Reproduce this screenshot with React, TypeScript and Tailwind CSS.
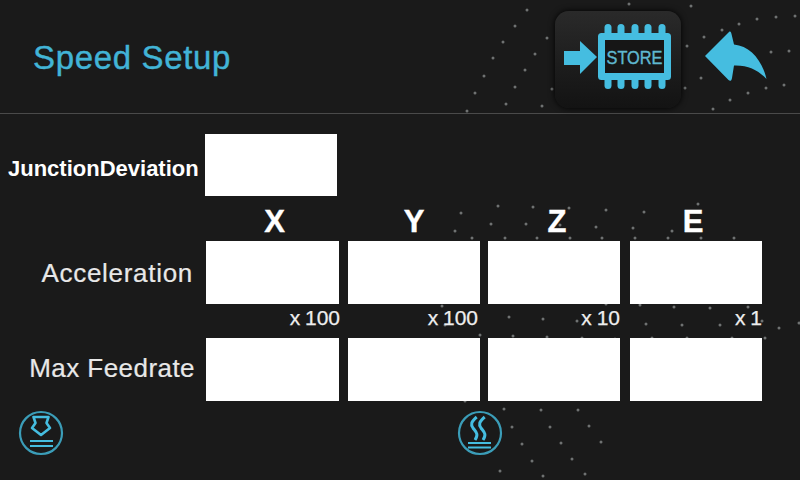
const dots: [number, number][] = [
  [527,10],[515,26],[503,42],[493,58],[484,76],[475,93],[467,111],[547,38],[535,54],[525,70],[515,87],[506,104],[542,106],[552,89],
  [629,4],[691,6],[704,37],[722,30],[739,24],[757,19],[776,17],[795,16],[687,46],[771,52],[789,51],[701,78],[766,88],[784,85],[748,93],[730,100],[685,88],[713,109],
  [498,206],[533,207],[569,208],[606,210],[644,212],[698,204],[461,213],[491,224],[526,224],[560,225],[596,227],[633,228],[672,231],[455,231],[472,238],[505,238],[537,238],[570,238],[602,238],[635,238],[668,238],[701,238],[734,238],
  [442,306],[606,304],[640,305],[674,307],[710,308],[748,307],[445,325],[509,317],[543,319],[577,321],[646,324],[682,325],[720,325],[762,321],[779,328],[799,323],[480,335],[513,336],[547,337],[582,338],[615,339],[652,338],[687,338],[732,338],[765,338],
  [465,401],[504,409],[541,410],[578,410],[512,427],[550,427],[589,426],[522,444],[561,443],[601,442],[532,461],[572,459],[500,471],[543,476],[585,474],
];

const font = "font-['Liberation_Sans',Arial,sans-serif]";
const cols = "grid-cols-[142px_140px_142px_132px]";

function StoreIcon() {
  const pins = [53, 66, 80, 93, 107];
  return (
    <svg width="126" height="97" viewBox="0 0 126 97">
      {pins.map((x) => (
        <g key={x} fill="#45bde0">
          <rect x={x - 3.5} y="13" width="7" height="12" rx="3.5" />
          <rect x={x - 3.5} y="66" width="7" height="12" rx="3.5" />
        </g>
      ))}
      <path d="M9 40H25V30L42 46L25 63V54H9Z" fill="#45bde0" />
      <rect x="46.5" y="25.5" width="66" height="40" fill="#161616" stroke="#45bde0" strokeWidth="7" strokeLinejoin="round" />
      <text x="79.5" y="53" textAnchor="middle" fontFamily="'Liberation Sans', Arial, sans-serif" fontSize="18" fill="#5fb8cf" stroke="#5fb8cf" strokeWidth="0.4" textLength="56" lengthAdjust="spacingAndGlyphs">STORE</text>
    </svg>
  );
}

function BackIcon() {
  return (
    <svg width="64" height="52" viewBox="0 0 64 52">
      <path d="M1 26L25 2C26.5 1 27 2 27.5 4L30 14.5C46 16 58 30 62.5 49C55 41 45 35 30 35.5L28 48C27.5 51 26 51.5 24.5 50Z" fill="#45bde0" />
    </svg>
  );
}

function ExtrudeIcon() {
  return (
    <svg width="46" height="48" viewBox="0 0 46 48" fill="none">
      <circle cx="23" cy="24" r="21" stroke="#3b9db8" strokeWidth="2.2" />
      <path d="M15.5 8H30.5L28.5 14L32 19L23 26L14 19L17.5 14Z" stroke="#45bde0" strokeWidth="2.6" strokeLinejoin="round" />
      <path d="M12 32H35M12 37H35" stroke="#45bde0" strokeWidth="2.2" />
    </svg>
  );
}

function HeatIcon() {
  return (
    <svg width="46" height="48" viewBox="0 0 46 48" fill="none">
      <circle cx="23" cy="24" r="21" stroke="#3b9db8" strokeWidth="2.2" />
      <path d="M19.7 8C14 13 13.5 15.5 16 19C19 23 22 25 18 31" stroke="#45bde0" strokeWidth="3" />
      <path d="M27.7 8C22 13 21.5 15.5 24 19C27 23 30 25 26 31" stroke="#45bde0" strokeWidth="3" />
      <path d="M11 34H34M11 38.5H34" stroke="#45bde0" strokeWidth="2.2" />
    </svg>
  );
}

function Cells() {
  return (
    <div className={`grid ${cols}`}>
      <div className="h-[63px] w-[133px] bg-white" />
      <div className="h-[63px] w-[132px] bg-white" />
      <div className="h-[63px] w-[132px] bg-white" />
      <div className="h-[63px] w-[132px] bg-white" />
    </div>
  );
}

export default function App() {
  return (
    <div className={`relative h-[480px] w-[800px] overflow-hidden bg-[#1a1a1a] ${font}`}>
      <svg className="absolute inset-0" width="800" height="480" viewBox="0 0 800 480">
        {dots.map(([x, y]) => (
          <circle key={`${x}-${y}`} cx={x} cy={y} r="1.5" fill="#6f7272" />
        ))}
      </svg>

      <div className="relative flex h-full flex-col">
        <header className="flex h-[114px] shrink-0 items-start border-b border-[#4a4a4a]">
          <h1 className="ml-[33px] mt-[39px] w-[522px] text-[33px] font-normal leading-[38px] tracking-[0.65px] text-[#42b4d6] [-webkit-text-stroke:0.4px_#42b4d6]">Speed Setup</h1>
          <button className="mt-[11px] h-[97px] w-[126px] rounded-[14px] bg-gradient-to-b from-[#2a2a2a] to-[#131313] shadow-[0_0_6px_#000]">
            <StoreIcon />
          </button>
          <div className="ml-[23px] mt-[30px]">
            <BackIcon />
          </div>
        </header>

        <div className="mt-[20px] flex h-[62px]">
          <div className="ml-[8px] w-[190px] whitespace-nowrap pt-[24px] text-[22px] font-bold leading-none text-white">JunctionDeviation</div>
          <div className="ml-[7px] h-[62px] w-[132px] bg-white" />
        </div>

        <div className={`ml-[206px] mt-[9px] grid h-[36px] ${cols} text-center text-[31px] font-bold leading-[33px] text-white [-webkit-text-stroke:0.4px_#ffffff]`}>
          <div className="w-[137px]">X</div>
          <div className="w-[132px]">Y</div>
          <div className="w-[138px]">Z</div>
          <div className="w-[126px]">E</div>
        </div>

        <div className="flex h-[63px]">
          <div className="flex w-[193px] items-center justify-end whitespace-nowrap text-[26px] leading-none tracking-[0.7px] text-[#e8e8e8] [-webkit-text-stroke:0.2px_#e8e8e8]">Acceleration</div>
          <div className="ml-[13px]"><Cells /></div>
        </div>

        <div className={`ml-[206px] grid h-[34px] ${cols} text-[21px] leading-[28px] text-[#eeeeee] [-webkit-text-stroke:0.25px_#eeeeee] [word-spacing:-1px]`}>
          <div className="w-[134px] text-right">x 100</div>
          <div className="w-[130px] text-right">x 100</div>
          <div className="w-[132px] text-right">x 10</div>
          <div className="w-[132px] text-right">x 1</div>
        </div>

        <div className="flex h-[63px]">
          <div className="flex w-[195px] items-start justify-end whitespace-nowrap pt-[17px] text-[26px] leading-none tracking-[0.45px] text-[#e8e8e8] [-webkit-text-stroke:0.2px_#e8e8e8]">Max Feedrate</div>
          <div className="ml-[11px]"><Cells /></div>
        </div>

        <div className="mt-[8px] flex">
          <div className="ml-[18px]"><ExtrudeIcon /></div>
          <div className="ml-[393px]"><HeatIcon /></div>
        </div>
      </div>
    </div>
  );
}
